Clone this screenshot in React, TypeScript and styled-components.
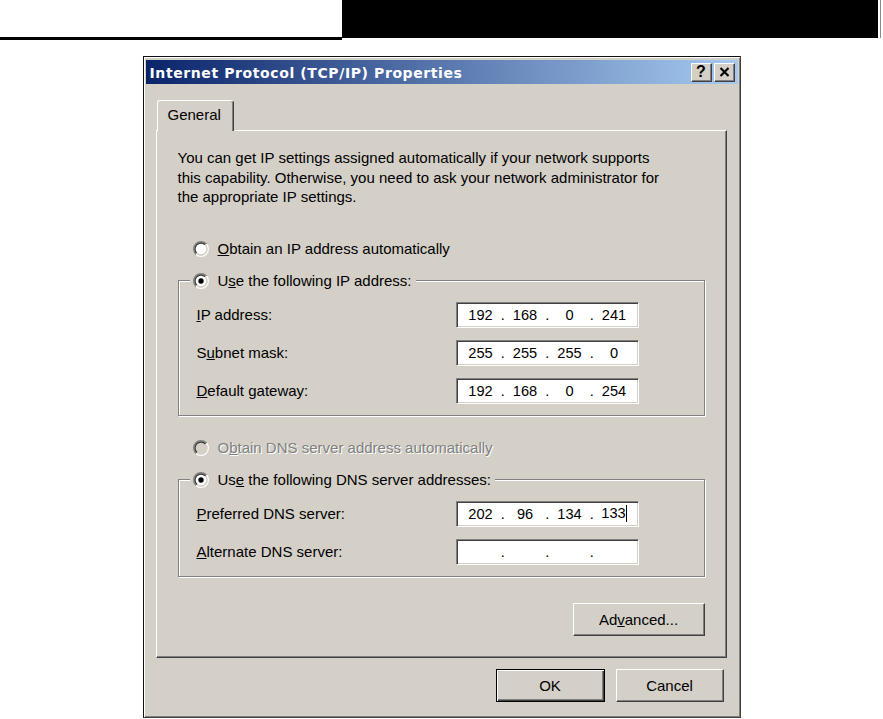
import React from "react";
import styled, { createGlobalStyle, css } from "styled-components";

const GlobalStyle = createGlobalStyle`
  html, body { margin: 0; padding: 0; background: #fff; }
  body { font-family: "Liberation Sans", Arial, sans-serif; }
  * { box-sizing: border-box; }
`;

const Page = styled.div`
  width: 883px;
  height: 719px;
  overflow: hidden;
`;

const Header = styled.div`
  display: flex;
  height: 40px;
`;

const HeaderLeft = styled.div`
  width: 342px;
  height: 40px;
  border-bottom: 3px solid #000;
`;

const HeaderRight = styled.div`
  width: 536px;
  height: 38px;
  background: #000;
  box-shadow: 2px 0 0 #fff, 3px 0 0 #8a8a8a;
`;

const Dialog = styled.div`
  margin: 16px auto 0;
  width: 598px;
  height: 662px;
  background: #d4d0c8;
  border: 1px solid;
  border-color: #111 #404040 #404040 #111;
  box-shadow: inset 1px 1px 0 #fff, inset -1px -1px 0 #808080;
  padding: 3px 2px 2px;
  display: flex;
  flex-direction: column;
`;

const TitleBar = styled.div`
  height: 24px;
  background: linear-gradient(to right, #0a246a, #a6caf0);
  display: flex;
  align-items: center;
  padding: 0 3px 0 4px;
  color: #fff;
  font-family: "DejaVu Sans", Verdana, sans-serif;
  font-weight: bold;
  font-size: 14px;
  letter-spacing: 0.6px;
`;

const TitleText = styled.div`
  flex: 1;
  white-space: nowrap;
  padding-top: 1px;
`;

const CaptionButtons = styled.div`
  display: flex;
  gap: 2px;
`;

const CaptionButton = styled.div`
  width: 21px;
  height: 19px;
  background: #d4d0c8;
  border: 1px solid;
  border-color: #fff #404040 #404040 #fff;
  box-shadow: inset -1px -1px 0 #808080;
  display: flex;
  align-items: center;
  justify-content: center;
  color: #000;
  font-family: "Liberation Sans", Arial, sans-serif;
  font-size: 16px;
  font-weight: bold;
  letter-spacing: 0;
  line-height: 1;
`;

const Body = styled.div`
  padding: 16px 11px 0 10px;
  display: flex;
  flex-direction: column;
`;

const TabStrip = styled.div`
  display: flex;
  padding-left: 1px;
  position: relative;
  z-index: 1;
  margin-bottom: -1px;
`;

const Tab = styled.div`
  width: 77px;
  height: 31px;
  background: #d4d0c8;
  border-top: 1px solid #fff;
  border-left: 1px solid #fff;
  border-right: 1px solid #404040;
  box-shadow: inset -1px 0 0 #808080;
  border-radius: 3px 3px 0 0;
  font-size: 15px;
  display: flex;
  align-items: center;
  padding: 0 0 3px 10px;
  color: #000;
`;

const Panel = styled.div`
  height: 528px;
  border: 1px solid;
  border-color: #fff #404040 #404040 #fff;
  box-shadow: inset -1px -1px 0 #808080;
  padding: 17px 21px 0 21px;
  display: flex;
  flex-direction: column;
  font-size: 15px;
  color: #000;
`;

const Description = styled.p`
  margin: 0;
  line-height: 19.5px;
  white-space: nowrap;
`;

const RadioRow = styled.div<{ $disabled?: boolean }>`
  display: flex;
  align-items: center;
  height: 20px;
  gap: 9px;
  padding-left: 15px;
  white-space: nowrap;
  ${(p) =>
    p.$disabled &&
    css`
      color: #808080;
      text-shadow: 1px 1px 0 #fff;
    `}
`;

const FirstRadio = styled(RadioRow)`
  margin-top: 32px;
`;

const DisabledRadio = styled(RadioRow)`
  margin-top: 22px;
`;

const Group = styled.fieldset`
  margin: 12px 0 0;
  padding: 11px 0 11px 0;
  min-width: 0;
  border: 1px solid #808080;
  box-shadow: 1px 1px 0 #fff, inset 1px 1px 0 #fff;
  display: flex;
  flex-direction: column;
  gap: 12px;
`;

const Legend = styled.legend`
  margin-left: 11px;
  padding: 0 4px 0 3px;
  height: 20px;
  display: flex;
  align-items: center;
  gap: 9px;
  background: #d4d0c8;
  white-space: nowrap;
`;

const FieldRow = styled.div`
  display: flex;
  align-items: center;
  justify-content: space-between;
  padding-left: 18px;
  padding-right: 65px;
`;

const FieldLabel = styled.span`
  white-space: nowrap;
`;

const IpBox = styled.div`
  width: 183px;
  height: 26px;
  background: #fff;
  border: 1px solid;
  border-color: #808080 #fff #fff #808080;
  box-shadow: inset 1px 1px 0 #404040, inset -1px -1px 0 #d4d0c8;
  display: flex;
  align-items: center;
  padding-left: 7px;
  font-size: 14.6px;
  color: #000;
`;

const Octet = styled.span`
  width: 34px;
  text-align: center;
  white-space: nowrap;
`;

const Dot = styled.span`
  width: 10.5px;
  text-align: center;
`;

const Caret = styled.span`
  display: inline-block;
  width: 1px;
  height: 17px;
  background: #000;
  vertical-align: -4px;
`;

const AdvancedRow = styled.div`
  display: flex;
  justify-content: flex-end;
  margin-top: 26px;
`;

const Button = styled.button<{ $default?: boolean; $w: number }>`
  width: ${(p) => p.$w}px;
  height: 33px;
  background: #d4d0c8;
  font-family: "Liberation Sans", Arial, sans-serif;
  font-size: 15px;
  color: #000;
  padding: 0;
  border: 1px solid;
  border-color: #fff #404040 #404040 #fff;
  box-shadow: inset -1px -1px 0 #808080;
  ${(p) =>
    p.$default &&
    css`
      border-color: #000;
      box-shadow: inset 1px 1px 0 #fff, inset -1px -1px 0 #404040,
        inset -2px -2px 0 #808080;
    `}
`;

const Footer = styled.div`
  display: flex;
  justify-content: flex-end;
  gap: 11px;
  margin-top: 11px;
  padding-right: 3px;
`;

type RadioProps = { checked?: boolean; disabled?: boolean };

const RadioIcon: React.FC<RadioProps> = ({ checked, disabled }) => (
  <svg width="16" height="16" viewBox="0 0 12 12" style={{ flex: "none" }}>
    <defs>
      <linearGradient id="rOuter" x1="0" y1="0" x2="1" y2="1">
        <stop offset="0.5" stopColor="#808080" />
        <stop offset="0.5" stopColor="#ffffff" />
      </linearGradient>
      <linearGradient id="rInner" x1="0" y1="0" x2="1" y2="1">
        <stop offset="0.5" stopColor="#404040" />
        <stop offset="0.5" stopColor="#d4d0c8" />
      </linearGradient>
    </defs>
    <circle cx="6" cy="6" r="5.5" fill="none" stroke="url(#rOuter)" strokeWidth="1" />
    <circle
      cx="6"
      cy="6"
      r="4.5"
      fill={disabled ? "#d4d0c8" : "#ffffff"}
      stroke="url(#rInner)"
      strokeWidth="1"
    />
    {checked && <circle cx="6" cy="6" r="2" fill="#000" />}
  </svg>
);

const CloseGlyph = () => (
  <svg width="11" height="10" viewBox="0 0 11 10">
    <path d="M1.5 1 L9.5 9 M9.5 1 L1.5 9" stroke="#000" strokeWidth="2.2" />
  </svg>
);

const IpField: React.FC<{ parts: string[]; caret?: boolean }> = ({ parts, caret }) => (
  <IpBox>
    {parts.map((p, i) => (
      <React.Fragment key={i}>
        <Octet>
          {p}
          {caret && i === 3 && <Caret />}
        </Octet>
        {i < 3 && <Dot>.</Dot>}
      </React.Fragment>
    ))}
  </IpBox>
);

export default function App() {
  return (
    <Page>
      <GlobalStyle />
      <Header>
        <HeaderLeft />
        <HeaderRight />
      </Header>
      <Dialog>
        <TitleBar>
          <TitleText>Internet Protocol (TCP/IP) Properties</TitleText>
          <CaptionButtons>
            <CaptionButton>?</CaptionButton>
            <CaptionButton>
              <CloseGlyph />
            </CaptionButton>
          </CaptionButtons>
        </TitleBar>
        <Body>
          <TabStrip>
            <Tab>General</Tab>
          </TabStrip>
          <Panel>
            <Description>
              You can get IP settings assigned automatically if your network supports
              <br />
              this capability. Otherwise, you need to ask your network administrator for
              <br />
              the appropriate IP settings.
            </Description>

            <FirstRadio>
              <RadioIcon />
              <span>
                <u>O</u>btain an IP address automatically
              </span>
            </FirstRadio>

            <Group>
              <Legend>
                <RadioIcon checked />
                <span>
                  U<u>s</u>e the following IP address:
                </span>
              </Legend>
              <FieldRow>
                <FieldLabel>
                  <u>I</u>P address:
                </FieldLabel>
                <IpField parts={["192", "168", "0", "241"]} />
              </FieldRow>
              <FieldRow>
                <FieldLabel>
                  S<u>u</u>bnet mask:
                </FieldLabel>
                <IpField parts={["255", "255", "255", "0"]} />
              </FieldRow>
              <FieldRow>
                <FieldLabel>
                  <u>D</u>efault gateway:
                </FieldLabel>
                <IpField parts={["192", "168", "0", "254"]} />
              </FieldRow>
            </Group>

            <DisabledRadio $disabled>
              <RadioIcon disabled />
              <span>
                O<u>b</u>tain DNS server address automatically
              </span>
            </DisabledRadio>

            <Group>
              <Legend>
                <RadioIcon checked />
                <span>
                  Us<u>e</u> the following DNS server addresses:
                </span>
              </Legend>
              <FieldRow>
                <FieldLabel>
                  <u>P</u>referred DNS server:
                </FieldLabel>
                <IpField parts={["202", "96", "134", "133"]} caret />
              </FieldRow>
              <FieldRow>
                <FieldLabel>
                  <u>A</u>lternate DNS server:
                </FieldLabel>
                <IpField parts={["", "", "", ""]} />
              </FieldRow>
            </Group>

            <AdvancedRow>
              <Button $w={132}>
                Ad<u>v</u>anced...
              </Button>
            </AdvancedRow>
          </Panel>
          <Footer>
            <Button $w={109} $default>
              OK
            </Button>
            <Button $w={108}>Cancel</Button>
          </Footer>
        </Body>
      </Dialog>
    </Page>
  );
}
